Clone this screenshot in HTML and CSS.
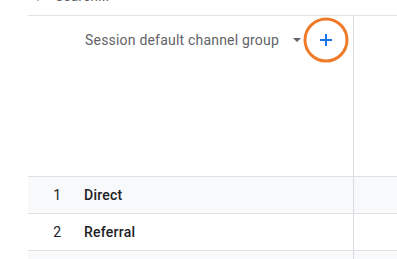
FILE: index.html
```html
<!DOCTYPE html>
<html lang="en">
<head>
  <meta charset="UTF-8" />
  <meta name="viewport" content="width=device-width, initial-scale=1.0"/>
  <title>Report table</title>
  <link rel="stylesheet" href="styles.css">
</head>
<body>
  <div class="search">
    <div class="search-inner">
      <svg class="search-icon" width="14" height="14" viewBox="0 0 24 24"><path d="M15.5 14h-.79l-.28-.27A6.47 6.47 0 0 0 16 9.5 6.5 6.5 0 1 0 9.5 16c1.61 0 3.09-.59 4.230-1.57l.27.28v.79l5 4.99L20.49 19l-4.99-5zm-6 0C7.01 14 5 11.990 5 9.5S7.01 5 9.5 5 14 7.01 14 9.5 11.99 14 9.5 14z" fill="#5f6368" transform="scale(-1,1) translate(-24,0)"/></svg>
      <span class="search-text">Search...</span>
    </div>
  </div>

  <div class="table">
    <div class="row header">
      <div class="cell main">
        <div class="head-content">
          <span class="head-title">Session default channel group</span>
          <span class="arrow"></span>
          <button class="add-btn" type="button">
            <svg width="14" height="14" viewBox="0 0 14 14"><path d="M7 1v12M1 7h12" stroke="#1a73e8" stroke-width="2"/></svg>
            <span class="highlight"></span>
          </button>
        </div>
      </div>
      <div class="cell"></div>
    </div>
    <div class="row shaded">
      <div class="cell main"><span class="num">1</span><span class="name">Direct</span></div>
      <div class="cell"></div>
    </div>
    <div class="row">
      <div class="cell main"><span class="num">2</span><span class="name">Referral</span></div>
      <div class="cell"></div>
    </div>
    <div class="row shaded">
      <div class="cell main"></div>
      <div class="cell"></div>
    </div>
  </div>
</body>
</html>
```

FILE: styles.css
```css
body {
  margin: 0;
  font-family: Roboto, "Liberation Sans", sans-serif;
  background: #fff;
  width: 397px;
  height: 259px;
  overflow: hidden;
}
.search {
  margin-left: 28px;
  height: 15px;
  border-bottom: 1px solid #e3e3e3;
  overflow: hidden;
}
.search-inner {
  display: flex;
  align-items: center;
  gap: 6px;
  margin-top: -11px;
  padding-left: 7px;
  height: 14px;
}
.search-text {
  font-size: 14px;
  color: #5f6368;
}
.table {
  margin-left: 28px;
}
.row {
  display: grid;
  grid-template-columns: 326px 1fr;
  height: 37px;
  box-sizing: border-box;
  border-top: 1px solid #e0e0e0;
}
.row.header {
  height: 160px;
  border-top: none;
}
.row.shaded {
  background: #f8f9fa;
}
.cell.main {
  box-sizing: border-box;
  border-right: 1px solid #dadce0;
  display: flex;
  align-items: center;
  font-size: 14px;
  color: #202124;
}
.header .cell.main {
  align-items: flex-start;
}
.head-content {
  display: flex;
  align-items: center;
  padding-left: 57px;
  margin-top: 10px;
  height: 28px;
}
.head-title {
  color: #5f6368;
  font-size: 14px;
  letter-spacing: 0.2px;
}
.arrow {
  margin-left: 14px;
  width: 0;
  height: 0;
  border-left: 4px solid transparent;
  border-right: 4px solid transparent;
  border-top: 4px solid #5f6368;
}
.add-btn {
  position: relative;
  margin-left: 11px;
  width: 28px;
  height: 28px;
  padding: 0;
  border: none;
  background: none;
  display: flex;
  align-items: center;
  justify-content: center;
}
.highlight {
  position: absolute;
  left: 50%;
  top: 50%;
  width: 45px;
  height: 45px;
  box-sizing: border-box;
  border: 3px solid #ef7b2a;
  border-radius: 50%;
  transform: translate(-50%, -50%);
}
.num {
  width: 33px;
  margin-right: 23px;
  text-align: right;
}
.name {
  font-weight: 500;
  letter-spacing: 0.25px;
}
```
